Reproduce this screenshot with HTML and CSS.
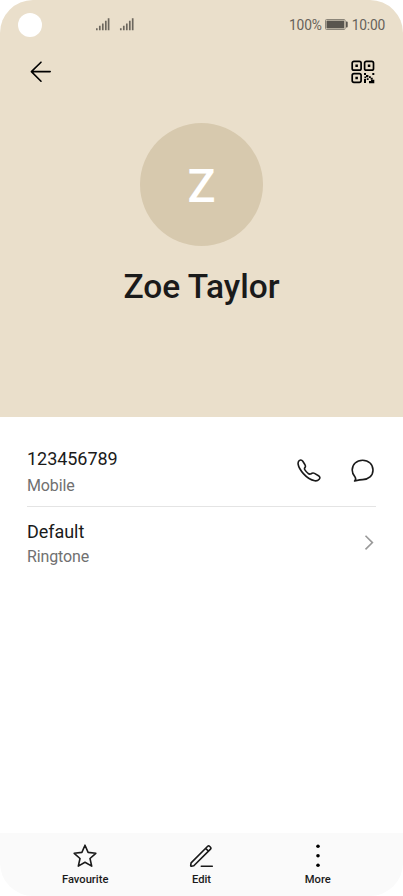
FILE: index.html
```html
<!DOCTYPE html>
<html lang="en">
<head>
<meta charset="utf-8">
<title>Contact</title>
<link rel="stylesheet" href="styles.css">
</head>
<body>
<main class="phone">
  <header class="hero">
    <div class="status">
      <span class="camera"></span>
      <svg class="signals" width="38" height="13" viewBox="0 0 38 13">
        <path d="M.8 10.2v2M3.800 7.800v4.400M6.800 5.400v6.800M9.800 2.800v9.400M12.600.2v12M24.800 10.200v2M27.800 7.800v4.400M30.800 5.400v6.800M33.800 2.800v9.400M36.700.2v12"/>
      </svg>
      <span class="percent">100%</span>
      <svg class="battery" width="24" height="11" viewBox="0 0 24 11">
        <rect x=".5" y=".5" width="19.600" height="10" rx="1" fill="none" stroke="#8b8579"/>
        <rect x="1.500" y="1.600" width="17.600" height="7.800" fill="#59554e"/>
        <path d="M21 2.500h.8q.9 0 .9 1v4q0 1-.9 1H21z" fill="#59554e"/>
      </svg>
      <span class="time">10:00</span>
    </div>
    <div class="toolbar">
      <svg class="back" width="22" height="22" viewBox="0 0 22 22">
        <path d="M11 1.200 1.400 10.600 11 20.200M1.400 10.600h18.800"/>
      </svg>
      <svg class="qr" width="24" height="24" viewBox="0 0 24 24">
        <g fill="none" stroke="#000" stroke-width="1.700">
          <rect x="1.200" y="1.300" width="8.900" height="8.900" rx="1.800"/>
          <rect x="13.600" y="1.300" width="8.900" height="8.900" rx="1.800"/>
          <rect x="1.200" y="13.700" width="8.900" height="8.700" rx="1.800"/>
        </g>
        <path d="M4.400 4.500h2.500V7H4.400zM16.800 4.500h2.500V7h-2.500zM4.400 16.800h2.500v2.500H4.400zM13 12.900h2v2h-2zM15 15h2.400v2.200H15v1h-1.600v-1.600H15zM21.300 12.900h2v2h-2zM18 16.200h1.800v1.600h1.900v1.800H19.600V18H18zM13 19.100h2v4h-2zM15.800 18.300h1.800v1.700h-1.800zM18 21h2v-1.200h3.300v3.400H18z"/>
      </svg>
    </div>
    <div class="avatar">Z</div>
    <h1 class="name">Zoe Taylor</h1>
  </header>

  <section class="details">
    <div class="row row-phone">
      <div class="text">
        <div class="value">123456789</div>
        <div class="label">Mobile</div>
      </div>
      <svg class="line-icon call" width="24" height="24" viewBox="0 0 24 24">
        <path d="M2.200 1.600C3.400.8 4.900 1 5.800 2.300L8 5.800c.7 1.200.6 2-.1 2.800-.6.700-.5 1.500 0 2.300.8 1.300 2 2.500 3.300 3.600.9.700 1.700.8 2.500.4l1.300-.6c.9-.4 1.700-.3 2.500.1l4 2.300c1.500.9 1.800 2.500.7 3.600-1.100 1.200-2.600 1.800-4.400 1.500-3.900-.8-8.100-3.500-11.400-7.200C3.600 11.400 1.700 8.400 1.200 5.500.9 3.900 1.200 2.400 2.200 1.600z"/>
      </svg>
      <svg class="line-icon message" width="24" height="24" viewBox="0 0 24 24">
        <path d="M12.600 1.300c6 0 10.400 4 10.400 9.700s-4.400 9.600-10.400 9.600c-1.100 0-2 .1-3 .3l-5 1.100c1.200-1.200 1.500-2.400.5-3.900C3.300 16.200 2.200 13.800 2.200 11c0-5.700 4.400-9.700 10.400-9.700z"/>
      </svg>
    </div>
    <div class="row row-ringtone">
      <div class="text">
        <div class="value">Default</div>
        <div class="label">Ringtone</div>
      </div>
      <svg class="chevron" width="10" height="16" viewBox="0 0 10 16">
        <path d="M1.500.8 8.400 7.600l-6.900 6.800"/>
      </svg>
    </div>
  </section>

  <nav class="actions">
    <div class="action">
      <svg class="line-icon" width="26" height="24" viewBox="0 0 26 24">
        <path d="M13 1.200l3.100 7.200 7.700.9-5.800 5.200 1.700 7.600-6.700-3.900-6.700 3.900L8 14.500 2.200 9.300l7.700-.9z"/>
      </svg>
      <span>Favourite</span>
    </div>
    <div class="action">
      <svg class="line-icon" width="26" height="24" viewBox="0 0 26 24">
        <path d="M3.100 18.900 19.700 2.300c.6-.6 1.200-.6 1.800 0l1 1c.6.600.6 1.200 0 1.800L5.800 21.800l-2.500.5c-.4 0-.6-.2-.6-.6zM17.700 4.400l2.800 2.800M13.300 22.200h11"/>
      </svg>
      <span>Edit</span>
    </div>
    <div class="action">
      <svg width="26" height="24" viewBox="0 0 26 24">
        <circle cx="13" cy="2.300" r="1.800"/><circle cx="13" cy="11.800" r="1.800"/><circle cx="13" cy="21.300" r="1.800"/>
      </svg>
      <span>More</span>
    </div>
  </nav>
</main>
</body>
</html>
```
FILE: styles.css
```css
* { box-sizing: border-box; }
body {
  margin: 0;
  background: #fff;
  font-family: Roboto, "Liberation Sans", sans-serif;
  color: #1a1a1a;
}
svg { display: block; flex: none; }
.phone {
  width: 403px;
  height: 896px;
  display: flex;
  flex-direction: column;
  border-radius: 33px;
  overflow: hidden;
  background: #fff;
}
.hero {
  height: 416.500px;
  flex: none;
  display: flex;
  flex-direction: column;
  align-items: center;
  background: #eadfcb;
}
.status {
  width: 100%;
  height: 50px;
  display: flex;
  align-items: center;
  padding: 0 18px;
  font-size: 13.800px;
  letter-spacing: -0.200px;
  color: #67625a;
}
.camera {
  width: 24px;
  height: 24px;
  border-radius: 50%;
  background: #fff;
}
.signals {
  margin: 0 0 2px 54px;
  fill: none;
  stroke: #6c675e;
  stroke-width: 1.700;
}
.percent { margin-left: auto; }
.percent, .time { padding-bottom: 1px; }
.battery { margin: 0 3px 1px; }
.toolbar {
  width: 100%;
  height: 44px;
  display: flex;
  align-items: center;
  justify-content: space-between;
  padding: 0 28px 0 29.500px;
}
.back {
  fill: none;
  stroke: #000;
  stroke-width: 1.600;
  stroke-linecap: round;
  stroke-linejoin: round;
}
.avatar {
  width: 123.300px;
  height: 123.300px;
  margin-top: 29px;
  border-radius: 50%;
  background: #d7c9ae;
  color: #fff;
  font-size: 46.500px;
  font-weight: 500;
  line-height: 126px;
  text-align: center;
}
.name {
  margin: 20.700px 0 0;
  font-size: 33.500px;
  font-weight: 500;
  line-height: 40px;
}
.details {
  flex: 1;
  padding: 24px 27px 0;
}
.row {
  display: flex;
  align-items: center;
}
.row-phone {
  height: 66px;
  padding-bottom: 3px;
  border-bottom: 1px solid #e4e4e4;
}
.row-ringtone { height: 72px; }
.text { flex: 1; }
.value {
  font-size: 18px;
  line-height: 24px;
  letter-spacing: -0.050px;
}
.label {
  font-size: 16px;
  line-height: 20px;
  letter-spacing: -0.120px;
  color: #707070;
}
.row-phone .label { margin-top: 5px; }
.row-ringtone .text { padding-top: 1px; }
.row-ringtone .label { margin-top: 3px; }
.line-icon {
  fill: none;
  stroke: #1a1a1a;
  stroke-width: 1.600;
  stroke-linecap: round;
  stroke-linejoin: round;
}
.row-phone .line-icon { margin-bottom: 2px; }
.call { margin-right: 29px; }
.message { margin-right: 2px; }
.chevron {
  margin: 0 2px 0 0;
  fill: none;
  stroke: #999;
  stroke-width: 1.600;
}
.actions {
  height: 63px;
  flex: none;
  display: flex;
  padding: 11px 27px 0;
  background: #fafafa;
}
.action {
  flex: 1;
  display: flex;
  flex-direction: column;
  align-items: center;
  font-size: 11.200px;
  font-weight: 500;
  line-height: 14px;
}
.action span { margin-top: 5px; }
```
